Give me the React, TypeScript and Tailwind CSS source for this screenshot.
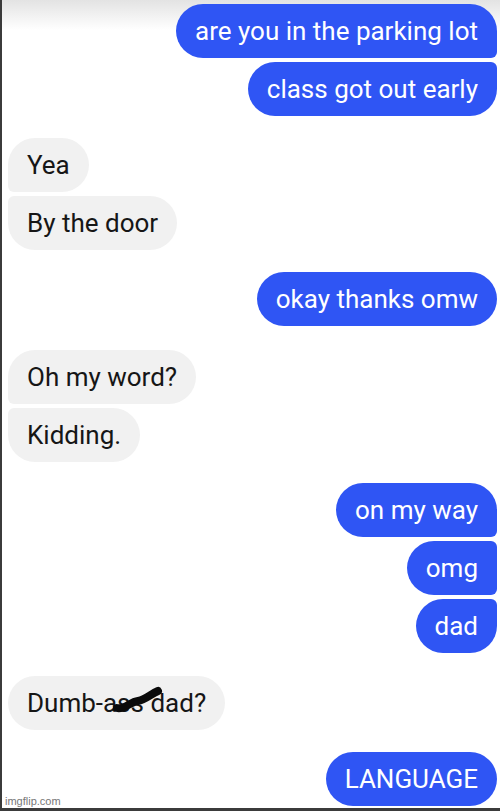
import React from "react";

type Side = "me" | "them";

const BIG = 27;
const SMALL = 6;

function Bubble({
  side,
  pos,
  children,
}: {
  side: Side;
  pos: "single" | "first" | "mid" | "last";
  children: React.ReactNode;
}) {
  const top = pos === "single" || pos === "first" ? BIG : SMALL;
  const bottom = pos === "single" || pos === "last" ? BIG : SMALL;
  const style: React.CSSProperties =
    side === "me"
      ? {
          borderTopLeftRadius: BIG,
          borderBottomLeftRadius: BIG,
          borderTopRightRadius: top,
          borderBottomRightRadius: bottom,
        }
      : {
          borderTopRightRadius: BIG,
          borderBottomRightRadius: BIG,
          borderTopLeftRadius: top,
          borderBottomLeftRadius: bottom,
        };
  return (
    <div
      style={style}
      className={
        side === "me"
          ? "self-end h-[54px] flex items-center px-[19px] bg-[#2f55f4] text-white text-[26px] leading-none"
          : "self-start h-[54px] flex items-center px-[19px] bg-[#f1f1f1] text-[#161616] text-[26px] leading-none"
      }
    >
      {children}
    </div>
  );
}

export default function App() {
  return (
    <div
      className="relative w-[500px] h-[811px] overflow-hidden border-l-2 border-b-[3px] border-[#3b3b3b] bg-[linear-gradient(to_bottom,#e3e3e3_0px,#ffffff_30px)]"
      style={{ fontFamily: "Roboto, 'Noto Sans', Arial, sans-serif" }}
    >
      <div className="flex flex-col pl-[6px] pr-[3px]">
        <div className="mt-[4px] flex flex-col gap-[4px]">
          <Bubble side="me" pos="first">are you in the parking lot</Bubble>
          <Bubble side="me" pos="last">class got out early</Bubble>
        </div>
        <div className="mt-[22px] flex flex-col gap-[4px]">
          <Bubble side="them" pos="first">Yea</Bubble>
          <Bubble side="them" pos="last">By the door</Bubble>
        </div>
        <div className="mt-[22px] flex flex-col gap-[4px]">
          <Bubble side="me" pos="single">okay thanks omw</Bubble>
        </div>
        <div className="mt-[24px] flex flex-col gap-[4px]">
          <Bubble side="them" pos="first">Oh my word?</Bubble>
          <Bubble side="them" pos="last">Kidding.</Bubble>
        </div>
        <div className="mt-[21px] flex flex-col gap-[4px]">
          <Bubble side="me" pos="first">on my way</Bubble>
          <Bubble side="me" pos="mid">omg</Bubble>
          <Bubble side="me" pos="last">dad</Bubble>
        </div>
        <div className="mt-[23px] flex flex-col gap-[4px]">
          <Bubble side="them" pos="single">
            <span className="relative">
              Dumb-ass dad?
              <svg
                className="absolute left-[85px] top-[-4px]"
                width="52"
                height="28"
                viewBox="0 0 52 28"
              >
                <path
                  d="M5 22 C 12 24, 18 16, 26 15 C 33 14, 39 8, 46 5"
                  stroke="#0a0a0a"
                  strokeWidth="8"
                  strokeLinecap="round"
                  fill="none"
                />
              </svg>
            </span>
          </Bubble>
        </div>
        <div className="mt-[22px] flex flex-col gap-[4px]">
          <Bubble side="me" pos="single">LANGUAGE</Bubble>
        </div>
      </div>
      <div
        className="absolute left-[3px] bottom-[1px] text-[11px] text-[#777] leading-none"
        style={{ fontFamily: "'Liberation Sans', Arial, sans-serif" }}
      >
        imgflip.com
      </div>
    </div>
  );
}
